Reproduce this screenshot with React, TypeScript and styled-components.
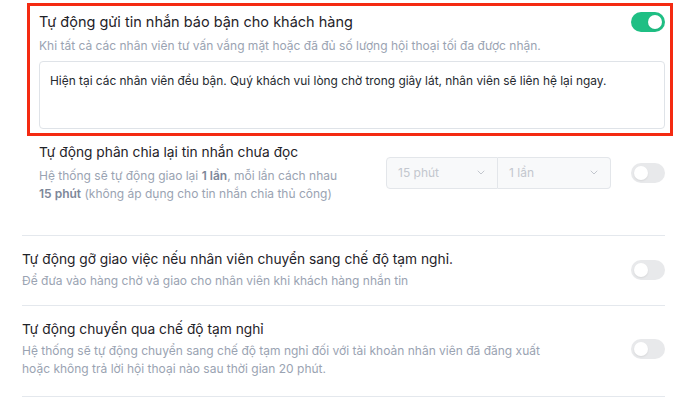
import React from "react";
import styled, { createGlobalStyle } from "styled-components";

const GlobalStyle = createGlobalStyle`
  html, body { margin: 0; padding: 0; background: #ffffff; }
  body { font-family: Inter, "Noto Sans", "Liberation Sans", sans-serif; }
  * { box-sizing: border-box; }
`;

const Page = styled.div`
  width: 684px;
  padding: 3px 19px 0 22px;
`;

const Group = styled.div`
  padding-left: 17px;
  padding-bottom: 32px;
`;

const Highlight = styled.div`
  border: 3px solid #f42a12;
  margin: 0 -8px 0 -12px;
  padding: 6px 5px 4px 9px;
`;

const Header = styled.div`
  display: flex;
  align-items: center;
  justify-content: space-between;
`;

const Title = styled.div<{ $size?: number }>`
  font-size: ${(p) => p.$size ?? 13.75}px;
  line-height: 20px;
  color: #1f2329;
`;

const Desc = styled.div<{ $mt?: number; $max?: number }>`
  margin-top: ${(p) => p.$mt ?? 5}px;
  font-size: 12px;
  line-height: 18px;
  color: #9aa3b2;
  max-width: ${(p) => (p.$max ? `${p.$max}px` : "none")};
  b {
    font-weight: 600;
    color: #7d8799;
  }
`;

const MessageBox = styled.div`
  margin-top: 6px;
  height: 68px;
  border: 1px solid #dfe3e8;
  border-radius: 4px;
  padding: 10px 10px;
  font-size: 11.9px;
  line-height: 18px;
  color: #262a30;
`;

const Row = styled.div<{ $pt: number; $pb: number }>`
  display: flex;
  align-items: center;
  padding: ${(p) => p.$pt}px 0 ${(p) => p.$pb}px;
`;

const SubRow = styled.div`
  display: flex;
  align-items: center;
  margin-top: 6px;
`;

const TextCol = styled.div`
  flex: 1;
  min-width: 0;
`;

const SelectGroup = styled.div`
  display: flex;
  margin-right: 20px;
`;

const Select = styled.div<{ $w: number; $first?: boolean }>`
  width: ${(p) => p.$w}px;
  height: 32px;
  display: flex;
  align-items: center;
  justify-content: space-between;
  padding: 0 12px 0 11px;
  background: #f8f9fa;
  border: 1px solid #e3e6ea;
  border-left-width: ${(p) => (p.$first ? 1 : 0)}px;
  border-radius: ${(p) => (p.$first ? "4px 0 0 4px" : "0 4px 4px 0")};
  font-size: 12px;
  color: #c3c7ce;
`;

const Toggle = styled.div<{ $on?: boolean }>`
  position: relative;
  flex: none;
  width: 34px;
  height: 20px;
  border-radius: 10px;
  background: ${(p) => (p.$on ? "#1fbf84" : "#e8e9eb")};
  &::after {
    content: "";
    position: absolute;
    top: 3px;
    left: ${(p) => (p.$on ? "17px" : "3px")};
    width: 14px;
    height: 14px;
    border-radius: 50%;
    background: #ffffff;
    box-shadow: 0 1px 2px rgba(0, 0, 0, 0.08);
  }
`;

const Divider = styled.div`
  height: 1px;
  background: #e4e8ed;
`;

const Chevron = () => (
  <svg width="8" height="5" viewBox="0 0 8 5" fill="none">
    <path d="M1 1l3 3 3-3" stroke="#c3c7ce" strokeWidth="1" strokeLinecap="round" strokeLinejoin="round" />
  </svg>
);

export default function App() {
  return (
    <>
      <GlobalStyle />
      <Page>
        <Group>
          <Highlight>
            <Header>
              <Title $size={14.5}>Tự động gửi tin nhắn báo bận cho khách hàng</Title>
              <Toggle $on />
            </Header>
            <Desc>
              Khi tất cả các nhân viên tư vấn vắng mặt hoặc đã đủ số lượng hội thoại tối đa được nhận.
            </Desc>
            <MessageBox>
              Hiện tại các nhân viên đều bận. Quý khách vui lòng chờ trong giây lát, nhân viên sẽ liên hệ lại ngay.
            </MessageBox>
          </Highlight>
          <SubRow>
            <TextCol>
              <Title>Tự động phân chia lại tin nhắn chưa đọc</Title>
              <Desc $max={310}>
                Hệ thống sẽ tự động giao lại <b>1 lần</b>, mỗi lần cách nhau <b>15 phút</b> (không áp dụng cho tin
                nhắn chia thủ công)
              </Desc>
            </TextCol>
            <SelectGroup>
              <Select $w={112} $first>
                <span>15 phút</span>
                <Chevron />
              </Select>
              <Select $w={113}>
                <span>1 lần</span>
                <Chevron />
              </Select>
            </SelectGroup>
            <Toggle />
          </SubRow>
        </Group>
        <Divider />
        <Row $pt={13} $pb={15}>
          <TextCol>
            <Title>Tự động gỡ giao việc nếu nhân viên chuyển sang chế độ tạm nghỉ.</Title>
            <Desc $mt={3}>Để đưa vào hàng chờ và giao cho nhân viên khi khách hàng nhắn tin</Desc>
          </TextCol>
          <Toggle />
        </Row>
        <Divider />
        <Row $pt={13} $pb={18}>
          <TextCol>
            <Title>Tự động chuyển qua chế độ tạm nghỉ</Title>
            <Desc $mt={3} $max={530}>
              Hệ thống sẽ tự động chuyển sang chế độ tạm nghỉ đối với tài khoản nhân viên đã đăng xuất hoặc không trả
              lời hội thoại nào sau thời gian 20 phút.
            </Desc>
          </TextCol>
          <Toggle />
        </Row>
        <Divider />
      </Page>
    </>
  );
}
